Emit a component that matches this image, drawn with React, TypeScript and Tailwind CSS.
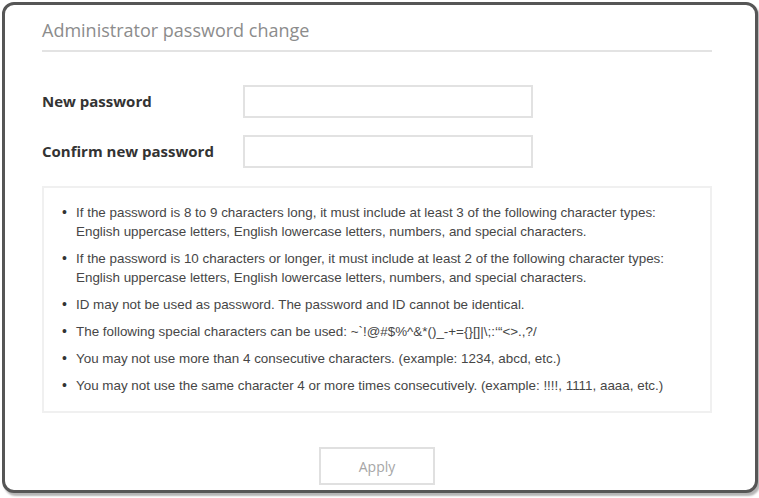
import React from "react";

const rules: string[][] = [
  [
    "If the password is 8 to 9 characters long, it must include at least 3 of the following character types:",
    "English uppercase letters, English lowercase letters, numbers, and special characters.",
  ],
  [
    "If the password is 10 characters or longer, it must include at least 2 of the following character types:",
    "English uppercase letters, English lowercase letters, numbers, and special characters.",
  ],
  ["ID may not be used as password. The password and ID cannot be identical."],
  ["The following special characters can be used: ~`!@#$%^&*()_-+={}[]|\\;:‘“<>.,?/"],
  ["You may not use more than 4 consecutive characters. (example: 1234, abcd, etc.)"],
  ["You may not use the same character 4 or more times consecutively. (example: !!!!, 1111, aaaa, etc.)"],
];

const App: React.FC = () => {
  return (
    <div className="w-[759px] h-[498px] bg-white pl-[2px] pt-[2px] overflow-hidden">
      <div className="w-[756px] h-[491px] border-[3px] border-[#565656] rounded-[12px] shadow-[2px_3px_2px_#b5b5b5] bg-white px-[37px] pt-[13px]">
        {/* Title */}
        <div
          className="w-[670px] pb-[8px] border-b-2 border-[#e3e3e3] text-[18px] leading-[24px] text-[#8c8c8c]"
          style={{ fontFamily: '"Open Sans", "Noto Sans", sans-serif' }}
        >
          Administrator password change
        </div>

        {/* Form rows */}
        <div
          className="mt-[33px] flex flex-col gap-[17px]"
          style={{ fontFamily: '"Open Sans", "Noto Sans", sans-serif' }}
        >
          <div className="flex items-center">
            <label className="w-[201px] text-[15px] font-bold text-[#333]">New password</label>
            <input
              type="password"
              className="w-[290px] h-[33px] border-2 border-[#e2e2e2] bg-white outline-none"
            />
          </div>
          <div className="flex items-center">
            <label className="w-[201px] text-[15px] font-bold text-[#333]">Confirm new password</label>
            <input
              type="password"
              className="w-[290px] h-[33px] border-2 border-[#e2e2e2] bg-white outline-none"
            />
          </div>
        </div>

        {/* Rules */}
        <div
          className="mt-[18px] w-[670px] border-2 border-[#f0f0f0] pt-[15px] pb-[16px] pl-[18px] text-[13.4px] leading-[19px] text-[#464646]"
          style={{ fontFamily: '"Liberation Sans", Arial, sans-serif' }}
        >
          <ul className="flex flex-col gap-[8px]">
            {rules.map((lines, i) => (
              <li key={i} className="flex">
                <span className="w-[14px] shrink-0 text-[14px] text-[#333]">•</span>
                <div>
                  {lines.map((l, j) => (
                    <div key={j}>{l}</div>
                  ))}
                </div>
              </li>
            ))}
          </ul>
        </div>

        {/* Apply */}
        <div className="w-[670px] flex justify-center mt-[34px]">
          <button
            className="w-[116px] h-[38px] border-2 border-[#e0e0e0] bg-white text-[14px] text-[#a6a6a6]"
            style={{ fontFamily: '"Open Sans", "Noto Sans", sans-serif' }}
          >
            Apply
          </button>
        </div>
      </div>
    </div>
  );
};

export default App;
